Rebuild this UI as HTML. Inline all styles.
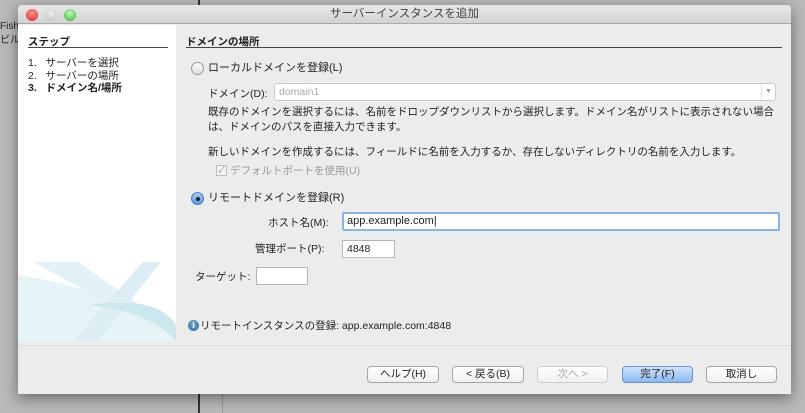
<!DOCTYPE html>
<html><head><meta charset="utf-8"><style>
*{margin:0;padding:0;box-sizing:border-box}
body{width:805px;height:413px;overflow:hidden;background:#b9b9b9;font-family:"Liberation Sans","Noto Sans CJK JP",sans-serif;font-size:10.5px;line-height:13px;color:#222;position:relative}
.a{position:absolute;white-space:nowrap}
.win{position:absolute;left:18px;top:5px;width:773px;height:389px;background:#ececec;box-shadow:0 4px 14px rgba(0,0,0,.45);border-radius:4px 4px 0 0}
.title{position:absolute;left:0;top:0;width:100%;height:19px;background:linear-gradient(#e8e8e8,#d3d3d3);border-bottom:1px solid #a9a9a9;border-radius:4px 4px 0 0;text-align:center;line-height:19px;font-size:11.5px;color:#444}
.dot{position:absolute;top:4px;width:12px;height:12px;border-radius:50%}
.left{position:absolute;left:0;top:20px;width:158px;height:316px;background:#fff;overflow:hidden}
.inp{position:absolute;background:#fff;border:1px solid #b5b5b5}
.btn{position:absolute;top:361px;height:17px;border:1px solid #a5a5a5;border-radius:4px;background:linear-gradient(#fff,#f0f0f0);text-align:center;line-height:15px;font-size:10.5px}
</style></head><body>
<div class="a" style="left:0;top:20px;font-size:10px">Fish</div>
<div class="a" style="left:0;top:34px;font-size:10px">ビル</div>
<div style="position:absolute;left:198px;top:0;width:2px;height:5px;background:#333"></div>
<div style="position:absolute;left:198px;top:394px;width:2px;height:19px;background:#333"></div>
<div style="position:absolute;left:222px;top:394px;width:1px;height:19px;background:#999"></div>
<div class="win">
<div class="title">サーバーインスタンスを追加
<div class="dot" style="left:8px;background:radial-gradient(circle at 50% 35%,#f99,#d22)"></div>
<div class="dot" style="left:27px;background:radial-gradient(circle at 50% 35%,#eee,#bbb)"></div>
<div class="dot" style="left:46px;background:radial-gradient(circle at 50% 35%,#bfb,#4a3)"></div>
</div>
<div class="left">
<svg width="158" height="316" style="position:absolute;left:0;top:0">
<path d="M0 250 Q70 260 158 300 L158 316 L0 316Z" fill="#e6f3f7"/>
<path d="M15 237 L60 237 L150 300 L130 300Z" fill="#e3f2f7"/>
<path d="M125 237 L143 237 L80 316 L55 316Z" fill="#dcedf3"/>
<path d="M70 280 Q140 270 158 300 L158 316 Q130 285 70 280Z" fill="#cde7ef"/>
</svg>
</div>
<div class="a" style="left:10px;top:31px;font-weight:bold">ステップ</div>
<div style="position:absolute;left:10px;top:42px;width:140px;height:1px;background:#444"></div>
<div class="a" style="left:10px;top:52px;line-height:12.5px">1.&nbsp;&nbsp;&nbsp;サーバーを選択<br>2.&nbsp;&nbsp;&nbsp;サーバーの場所<br><b>3.&nbsp;&nbsp;&nbsp;ドメイン名/場所</b></div>
<div class="a" style="left:168px;top:31px;font-weight:bold">ドメインの場所</div>
<div style="position:absolute;left:168px;top:42px;width:596px;height:1px;background:#444"></div>
<div style="position:absolute;left:173px;top:57px;width:13px;height:13px;border-radius:50%;border:1px solid #999;background:linear-gradient(#fff,#ddd)"></div>
<div class="a" style="left:190px;top:57px;font-size:11px">ローカルドメインを登録(L)</div>
<div class="a" style="left:190px;top:83px">ドメイン(D):</div>
<div class="inp" style="left:256px;top:78px;width:502px;height:18px;border-color:#ccc;border-radius:3px;color:#aaa;padding-left:4px;line-height:16px">domain1<span style="position:absolute;right:0;top:0;width:14px;height:16px;border-left:1px solid #ddd;font-size:7px;text-align:center;color:#999">▼</span></div>
<div class="a" style="left:190px;top:100px;line-height:15px">既存のドメインを選択するには、名前をドロップダウンリストから選択します。ドメイン名がリストに表示されない場合<br>は、ドメインのパスを直接入力できます。</div>
<div class="a" style="left:190px;top:141px">新しいドメインを作成するには、フィールドに名前を入力するか、存在しないディレクトリの名前を入力します。</div>
<div style="position:absolute;left:198px;top:160px;width:11px;height:11px;border:1px solid #bbb;background:#f4f4f4;font-size:9px;line-height:9px;color:#999;text-align:center">✓</div>
<div class="a" style="left:212px;top:160px;color:#999">デフォルトポートを使用(U)</div>
<div style="position:absolute;left:173px;top:187px;width:13px;height:13px;border-radius:50%;border:1px solid #4a7fc4;background:linear-gradient(#a9cbf2,#5f97dc)"><div style="position:absolute;left:3.5px;top:3.5px;width:4px;height:4px;border-radius:50%;background:#123"></div></div>
<div class="a" style="left:190px;top:187px;font-size:11px">リモートドメインを登録(R)</div>
<div class="a" style="left:250px;top:212px">ホスト名(M):</div>
<div class="inp" style="left:324px;top:207px;width:438px;height:19px;border:2px solid #8ab4e6;border-radius:2px;padding-left:3px;line-height:15px;font-size:11px">app.example.com|</div>
<div class="a" style="left:237px;top:238px">管理ポート(P):</div>
<div class="inp" style="left:324px;top:235px;width:53px;height:18px;padding-left:4px;line-height:16px">4848</div>
<div class="a" style="left:177px;top:266px">ターゲット:</div>
<div class="inp" style="left:238px;top:262px;width:52px;height:18px"></div>
<div style="position:absolute;left:170px;top:315px;width:11px;height:11px;border-radius:50%;background:radial-gradient(circle at 50% 35%,#7ab,#2466b0);color:#fff;font-size:9px;font-weight:bold;text-align:center;line-height:11px;font-family:'Liberation Serif',serif">i</div>
<div class="a" style="left:182px;top:315px">リモートインスタンスの登録: app.example.com:4848</div>
<div style="position:absolute;left:0;top:340px;width:100%;height:1px;background:#dcdcdc"></div>
<div class="btn" style="left:349px;width:72px">ヘルプ(H)</div>
<div class="btn" style="left:434px;width:72px">&lt; 戻る(B)</div>
<div class="btn" style="left:519px;width:71px;color:#aaa;border-color:#ccc">次へ &gt;</div>
<div class="btn" style="left:604px;width:71px;border-color:#6d8fc4;background:linear-gradient(#cfe2fb,#8cb9f1)">完了(F)</div>
<div class="btn" style="left:688px;width:71px">取消し</div>
</div>
</body></html>
